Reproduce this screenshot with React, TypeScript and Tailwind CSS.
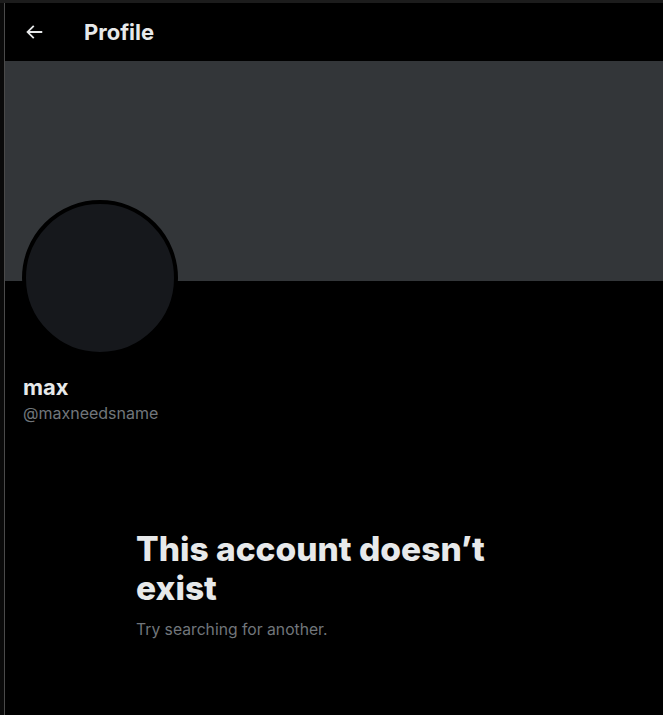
import React from "react";

const font = { fontFamily: 'Inter, "Noto Sans", sans-serif' };

function BackArrow() {
  return (
    <svg viewBox="0 0 24 24" className="w-[22px] h-[22px]" fill="#e7e9ea">
      <path d="M7.414 13l5.043 5.04-1.414 1.42L3.586 12l7.457-7.46 1.414 1.42L7.414 11H21v2H7.414z" />
    </svg>
  );
}

export default function App() {
  return (
    <div className="w-full h-[715px] bg-black flex flex-col overflow-hidden" style={font}>
      <div className="h-[3px] bg-[#1c1c1c] flex-shrink-0" />
      <div className="flex flex-1 min-h-0">
        <div className="w-[4px] bg-[#0a0a0a] flex-shrink-0" />
        <main className="flex-1 border-l border-[#4a4a4a] flex flex-col">
          {/* Header */}
          <div className="h-[58px] flex items-center flex-shrink-0">
            <div className="w-[79px] pl-[18px] flex items-center">
              <BackArrow />
            </div>
            <h1 className="text-[22px] font-bold text-[#e7e9ea] leading-[26px]">Profile</h1>
          </div>

          {/* Banner */}
          <div className="h-[220px] bg-[#333639] flex-shrink-0" />

          {/* Profile info */}
          <div className="px-[17px]">
            <div className="-mt-[81px] w-[156px] h-[156px] rounded-full border-4 border-black bg-[#16181c]" />
            <div className="mt-[18px] pl-[1px]">
              <p className="text-[22px] font-bold text-[#e7e9ea] leading-[26px]">max</p>
              <p className="text-[16px] text-[#71767b] leading-[22px] mt-[2px]">@maxneedsname</p>
            </div>
          </div>

          {/* Empty state */}
          <div className="mt-[106px] ml-[131px] w-[400px]">
            <h2 className="text-[33.5px] font-extrabold text-[#e7e9ea] leading-[39px]">
              This account doesn’t exist
            </h2>
            <p className="text-[15.7px] text-[#71767b] leading-[22px] mt-[11px]">Try searching for another.</p>
          </div>
        </main>
      </div>
    </div>
  );
}
